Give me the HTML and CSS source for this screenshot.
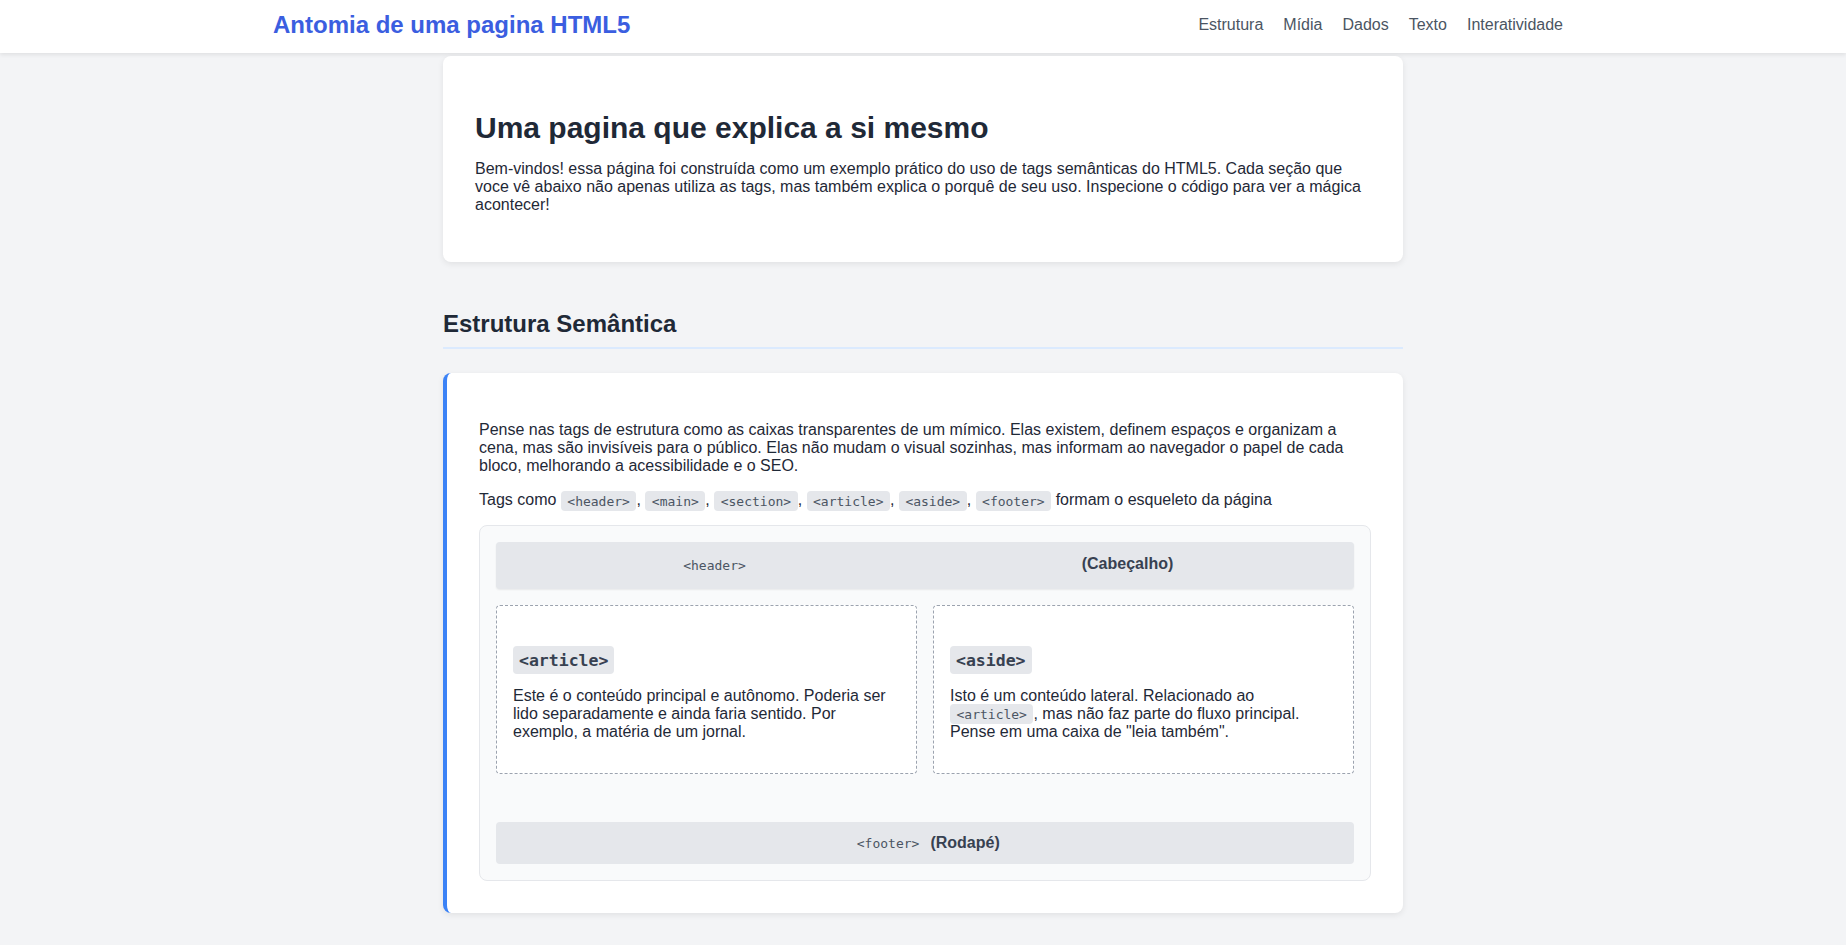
FILE: index.html
```html
<!DOCTYPE html>
<html lang="pt-BR">
<head>
<meta charset="utf-8">
<title>Antomia de uma pagina HTML5</title>
<link rel="stylesheet" href="styles.css">
</head>
<body>
<header class="site-header">
  <div class="header-inner">
    <h1 class="logo">Antomia de uma pagina HTML5</h1>
    <nav class="nav">
      <a href="#estrutura">Estrutura</a>
      <a href="#midia">Mídia</a>
      <a href="#dados">Dados</a>
      <a href="#texto">Texto</a>
      <a href="#interatividade">Interatividade</a>
    </nav>
  </div>
</header>
<main class="main">
  <section class="card intro">
    <h2 class="intro-title">Uma pagina que explica a si mesmo</h2>
    <p>Bem-vindos! essa página foi construída como um exemplo prático do uso de tags semânticas do HTML5. Cada seção que voce vê abaixo não apenas utiliza as tags, mas também explica o porquê de seu uso. Inspecione o código para ver a mágica acontecer!</p>
  </section>

  <section class="topic" id="estrutura">
    <h2 class="topic-title">Estrutura Semântica</h2>
    <article class="card card-accent">
      <p>Pense nas tags de estrutura como as caixas transparentes de um mímico. Elas existem, definem espaços e organizam a cena, mas são invisíveis para o público. Elas não mudam o visual sozinhas, mas informam ao navegador o papel de cada bloco, melhorando a acessibilidade e o SEO.</p>
      <p>Tags como <code class="tag">&lt;header&gt;</code>, <code class="tag">&lt;main&gt;</code>, <code class="tag">&lt;section&gt;</code>, <code class="tag">&lt;article&gt;</code>, <code class="tag">&lt;aside&gt;</code>, <code class="tag">&lt;footer&gt;</code> formam o esqueleto da página</p>
      <div class="diagram">
        <div class="d-header">
          <code class="tag">&lt;header&gt;</code>
          <strong>(Cabeçalho)</strong>
        </div>
        <div class="d-main">
          <div class="d-box">
            <h3 class="d-title"><code class="tag tag-lg">&lt;article&gt;</code></h3>
            <p>Este é o conteúdo principal e autônomo. Poderia ser lido separadamente e ainda faria sentido. Por exemplo, a matéria de um jornal.</p>
          </div>
          <div class="d-box">
            <h3 class="d-title"><code class="tag tag-lg">&lt;aside&gt;</code></h3>
            <p>Isto é um conteúdo lateral. Relacionado ao <code class="tag">&lt;article&gt;</code>, mas não faz parte do fluxo principal. Pense em uma caixa de "leia também".</p>
          </div>
        </div>
        <div class="d-footer"><code class="tag">&lt;footer&gt;</code> <strong>(Rodapé)</strong></div>
      </div>
    </article>
  </section>
</main>
</body>
</html>
```

FILE: styles.css
```css
* {
  box-sizing: border-box;
}

body {
  margin: 0;
  background: #f3f4f6;
  font-family: "Liberation Sans", Arial, sans-serif;
  font-size: 16px;
  color: #1f2937;
}

.site-header {
  background: #ffffff;
  box-shadow: 0 2px 4px rgba(0, 0, 0, 0.08);
  padding: 11px 0 14px;
}

.header-inner {
  max-width: 1300px;
  margin: 0 auto;
  display: flex;
  justify-content: space-between;
  align-items: center;
}

.logo {
  margin: 0;
  font-size: 24px;
  font-weight: bold;
  color: #3b5ee0;
}

.nav {
  display: flex;
}

.nav a {
  color: #4b5563;
  text-decoration: none;
  margin: 0 10px;
}

.main {
  max-width: 960px;
  margin: 0 auto;
  padding: 3px 0 40px;
}

.card {
  background: #ffffff;
  border-radius: 8px;
  box-shadow: 0 2px 6px rgba(0, 0, 0, 0.08);
  padding: 32px;
}

.intro-title {
  font-size: 30px;
  margin: 23px 0 15px;
  color: #1f2937;
}

.intro p {
  margin: 0 0 16px;
}

.topic {
  margin-top: 48px;
}

.topic-title {
  font-size: 24px;
  margin: 0 0 24px;
  padding-bottom: 9px;
  border-bottom: 2px solid #dbeafe;
  color: #1f2937;
}

.card-accent {
  border-left: 4px solid #3b82f6;
}

.card-accent > p {
  margin: 16px 0;
}

.tag {
  font-family: "DejaVu Sans Mono", "Liberation Mono", monospace;
  font-size: 13px;
  background: #e5e7eb;
  color: #4b5563;
  padding: 2.5px 6.5px;
  border-radius: 4px;
}

.tag-lg {
  display: inline-block;
  font-size: 16.5px;
  font-weight: bold;
  padding: 4.5px 6px;
  color: #374151;
}

.diagram {
  background: #f9fafb;
  border: 1px solid #e5e7eb;
  border-radius: 8px;
  padding: 16px;
}

.d-header {
  background: #e5e7eb;
  border-radius: 4px;
  padding: 13px 16px;
  display: flex;
  justify-content: space-around;
  align-items: flex-start;
  box-shadow: 0 1px 2px rgba(0, 0, 0, 0.07);
  color: #374151;
}

.d-header .tag {
  padding-top: 3px;
  padding-bottom: 3px;
}

.d-main {
  display: grid;
  grid-template-columns: 1fr 1fr;
  gap: 16px;
  margin: 16px 0 48px;
}

.d-box {
  background: #ffffff;
  border: 1px dashed #9ca3af;
  border-radius: 4px;
  padding: 16px;
}

.d-title {
  display: flex;
  margin: 24px 0 12.6px;
}

.d-box p {
  margin: 0 0 16px;
}

.d-footer {
  background: #e5e7eb;
  border-radius: 4px;
  padding: 12px 16px;
  text-align: center;
  color: #374151;
}
```
